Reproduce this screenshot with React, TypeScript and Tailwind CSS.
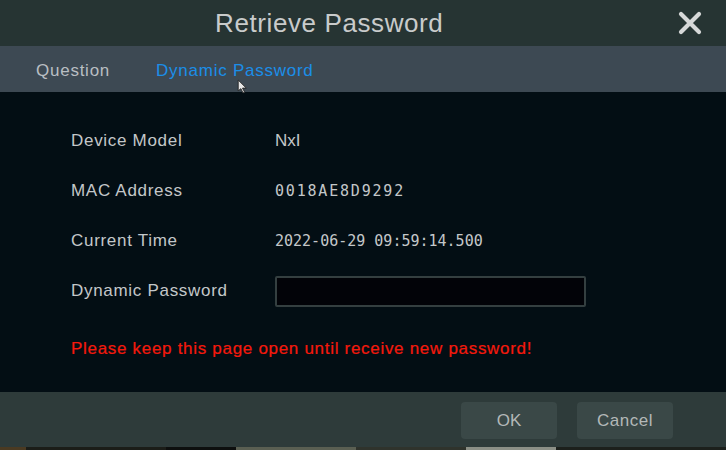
export default function App() {
  const rows = [
    { label: "Device Model", value: "NxI", mono: false },
    { label: "MAC Address", value: "0018AE8D9292", mono: true, mac: true },
    { label: "Current Time", value: "2022-06-29 09:59:14.500", mono: true },
  ];

  return (
    <div className="w-[726px] h-[450px] flex flex-col overflow-hidden bg-black font-['Liberation_Sans',Arial,sans-serif]">
      {/* Title bar */}
      <div className="h-[46px] shrink-0 bg-[#263433] flex items-center pl-[215px] relative">
        <span className="text-[26px] text-[#c9cbcb] tracking-[0.6px]">Retrieve Password</span>
        <svg
          className="absolute right-[24px] top-[11px]"
          width="24"
          height="24"
          viewBox="0 0 24 24"
        >
          <path d="M3 3 L21 21 M21 3 L3 21" stroke="#d6d8d8" strokeWidth="4.2" strokeLinecap="round" />
        </svg>
      </div>

      {/* Tabs */}
      <div className="h-[46px] shrink-0 bg-[#3d4953] flex items-center pl-[36px] pt-[4px] gap-[46px] text-[17px] tracking-[0.75px] relative">
        <span className="text-[#b9bec2]">Question</span>
        <span className="text-[#1b8ee8]">Dynamic Password</span>
        <svg className="absolute left-[236px] top-[33px]" width="13" height="15" viewBox="0 0 12 14">
          <path d="M2 1 L2 11 L4.5 9 L6.5 13 L8 12.3 L6 8.5 L9.5 8.5 Z" fill="#e8e8e8" stroke="#222" strokeWidth="0.8" />
        </svg>
      </div>

      {/* Body */}
      <div className="h-[300px] shrink-0 bg-[#030e14] pt-[24px] pl-[71px]">
        {rows.map((r) => (
          <div key={r.label} className="h-[50px] flex items-center">
            <span className="w-[204px] text-[17px] tracking-[0.7px] text-[#c3c7c9]">{r.label}</span>
            <span
              className={
                r.mono
                  ? r.mac
                    ? "text-[15px] text-[#c3c7c9] font-['DejaVu_Sans_Mono',monospace] tracking-[1.8px]"
                    : "text-[15px] text-[#c3c7c9] font-['DejaVu_Sans_Mono',monospace]"
                  : "text-[17px] text-[#c3c7c9]"
              }
            >
              {r.value}
            </span>
          </div>
        ))}
        <div className="h-[50px] flex items-center">
          <span className="w-[204px] text-[17px] tracking-[0.7px] text-[#c3c7c9]">Dynamic Password</span>
          <div className="w-[311px] h-[31px] bg-[#020308] border-2 border-[#343f40] rounded-[2px]" />
        </div>
        <div className="mt-[8px] h-[50px] flex items-center">
          <span className="text-[17px] text-[#f5190c] tracking-[0.7px] [-webkit-text-stroke:0.2px_#f5190c]">
            Please keep this page open until receive new password!
          </span>
        </div>
      </div>

      {/* Footer */}
      <div className="h-[55px] shrink-0 bg-[#2e3b3a] flex justify-end items-start pt-[10px] pr-[53px] gap-[20px]">
        <button className="w-[96px] h-[37px] rounded-[4px] bg-[#3a4847] text-[17px] text-[#b3b8b8]">OK</button>
        <button className="w-[96px] h-[37px] rounded-[4px] bg-[#3a4847] text-[17px] text-[#b3b8b8] tracking-[0.5px]">Cancel</button>
      </div>

      {/* Background strip */}
      <div className="flex-1 flex">
        <div className="w-[26px] bg-[#4a3a22]" />
        <div className="w-[140px] bg-[#1b1d18]" />
        <div className="w-[70px] bg-[#0d0f0e]" />
        <div className="w-[120px] bg-[#5a5f52]" />
        <div className="w-[110px] bg-[#2f332c]" />
        <div className="w-[90px] bg-[#8b8f86]" />
        <div className="flex-1 bg-[#1c201c]" />
      </div>
    </div>
  );
}
